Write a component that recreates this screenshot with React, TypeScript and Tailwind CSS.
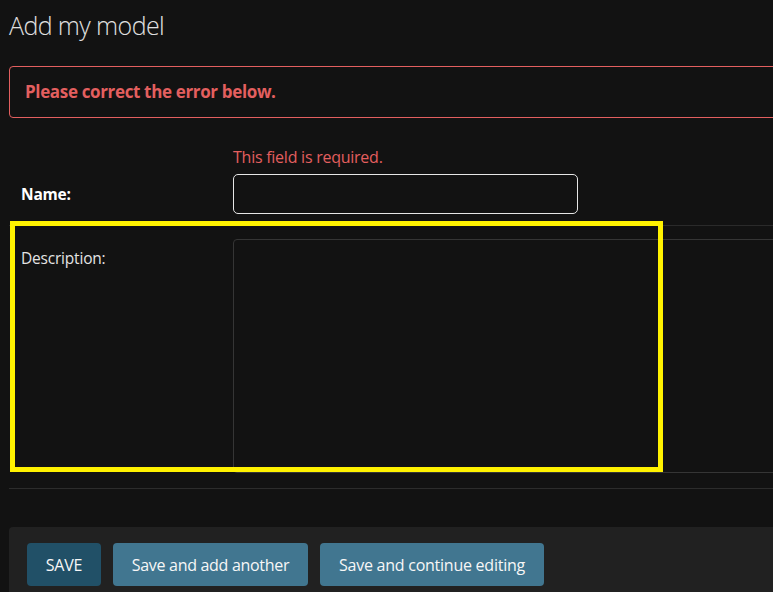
import React from "react";

export default function App() {
  const font = { fontFamily: '"Open Sans", "Noto Sans", sans-serif' };
  return (
    <div
      className="relative w-[773px] h-[592px] overflow-hidden bg-[#121212] font-['Open_Sans',sans-serif]"
      style={font}
    >
      <div className="w-[820px] pl-[9px]">
        <h1 className="pt-[9px] text-[25px] leading-[32px] font-light text-[#e0e0e0] tracking-[-0.6px]">
          Add my model
        </h1>

        <div className="mt-[25px] h-[52px] flex items-center px-[15px] border border-[#e35f5f] rounded-[4px]">
          <p className="text-[17px] leading-[20px] font-bold text-[#e35f5f] tracking-[-0.35px]">
            Please correct the error below.
          </p>
        </div>

        <div className="pt-[29px] pl-[12px] pb-[11px] border-b border-[#2a2a2a]">
          <p className="ml-[212px] mb-[7px] text-[16px] leading-[20px] text-[#e35f5f] tracking-[-0.25px]">
            This field is required.
          </p>
          <div className="flex items-start">
            <label className="w-[212px] shrink-0 pt-[10px] text-[15.5px] leading-[20px] font-bold text-white tracking-[-0.2px]">
              Name:
            </label>
            <div className="w-[345px] h-[40px] border border-[#e6e6e6] rounded-[5px] bg-[#121212]" />
          </div>
        </div>

        <div className="pt-[13px] pl-[12px] pb-[15px] border-b border-[#2c2c2c]">
          <div className="flex items-start">
            <label className="w-[212px] shrink-0 pt-[9px] text-[15.5px] leading-[20px] text-[#e4e4e4] tracking-[-0.2px]">
              Description:
            </label>
            <div className="w-[570px] h-[234px] border border-[#353535] rounded-[4px] bg-[#121212]" />
          </div>
        </div>

        <div className="mt-[38px] h-[80px] bg-[#212121] rounded-[4px] pt-[16px] pl-[18px] flex items-start gap-[12px]">
          <button className="w-[74px] h-[43px] rounded-[4px] bg-[#215067] text-[#f7f7f7] text-[16px] tracking-[-0.2px]">
            SAVE
          </button>
          <button className="w-[195px] h-[43px] rounded-[4px] bg-[#417690] text-[#f7f7f7] text-[16px] tracking-[-0.3px]">
            Save and add another
          </button>
          <button className="w-[224px] h-[43px] rounded-[4px] bg-[#417690] text-[#f7f7f7] text-[16px] tracking-[-0.25px]">
            Save and continue editing
          </button>
        </div>
      </div>

      <div className="absolute left-[10px] top-[221px] w-[653px] h-[251px] border-[5px] border-[#fff200] pointer-events-none" />
    </div>
  );
}
